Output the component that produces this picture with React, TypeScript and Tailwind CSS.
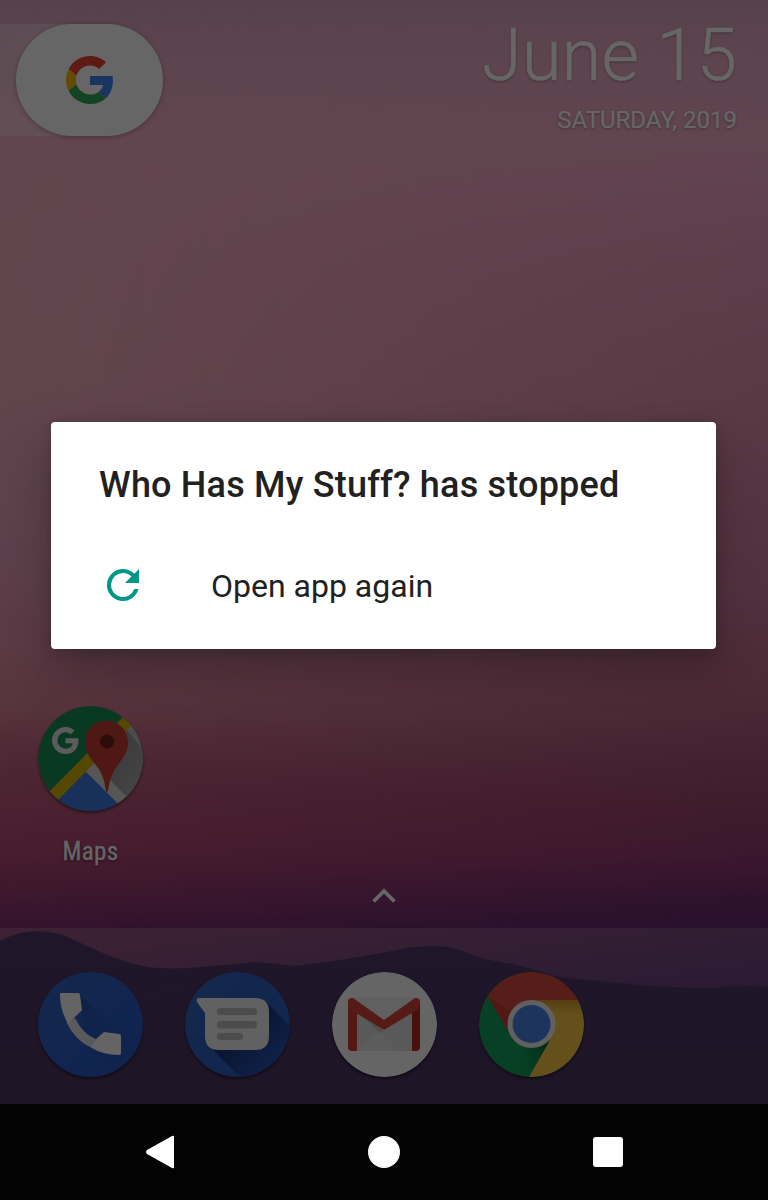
import React from "react";

function GoogleG({ className, mono }: { className: string; mono?: boolean }) {
  const c = mono ? ["#e6e6e6", "#e6e6e6", "#e6e6e6", "#e6e6e6"] : ["#4285f4", "#34a853", "#fbbc05", "#ea4335"];
  return (
    <svg viewBox="0 0 48 48" className={className}>
      <path fill={c[3]} d="M24 9.5c3.54 0 6.71 1.22 9.21 3.6l6.85-6.85C35.9 2.38 30.47 0 24 0 14.62 0 6.51 5.38 2.56 13.22l7.98 6.19C12.43 13.72 17.74 9.5 24 9.5z" />
      <path fill={c[0]} d="M46.98 24.55c0-1.57-.15-3.09-.38-4.55H24v9.02h12.94c-.58 2.96-2.26 5.48-4.78 7.18l7.73 6c4.51-4.18 7.09-10.36 7.09-17.65z" />
      <path fill={c[2]} d="M10.53 28.59c-.48-1.45-.76-2.99-.76-4.59s.27-3.14.76-4.59l-7.98-6.19C.92 16.46 0 20.12 0 24c0 3.88.92 7.54 2.56 10.78l7.97-6.19z" />
      <path fill={c[1]} d="M24 48c6.48 0 11.93-2.13 15.89-5.81l-7.73-6c-2.15 1.45-4.92 2.3-8.16 2.3-6.26 0-11.57-4.22-13.47-9.91l-7.98 6.19C6.51 42.62 14.62 48 24 48z" />
    </svg>
  );
}

const iconClass = "block size-[105px] shrink-0 rounded-full shadow-[0_2px_3px_rgba(0,0,0,0.45)]";

function MapsIcon() {
  return (
    <div className="relative size-[105px]">
      <svg viewBox="0 0 105 105" className={iconClass}>
        <defs>
          <clipPath id="maps"><circle cx="52.5" cy="52.5" r="52.5" /></clipPath>
          <linearGradient id="mapsShade" x1="0" y1="0" x2="1" y2="1">
            <stop offset="0" stopColor="#8e8e8e" /><stop offset="1" stopColor="#b4b4b4" />
          </linearGradient>
        </defs>
        <g clipPath="url(#maps)">
          <path fill="#1a8f55" d="M0 0h105v105H0z" />
          <path fill="#bcbcbc" d="M92 19L47 65l44 44h30V19z" />
          <path fill="url(#mapsShade)" d="M89 24L71 74l17 18 30-12V60z" />
          <path fill="#d8d8d8" d="M47 65l8-8 34 34-9 7z" />
          <path fill="#3e7be0" d="M47 65l34 34v10H5z" />
          <path fill="#d8b305" d="M4 93L86 10l9 8L13 101z" />
        </g>
        <path fill="#c53e33" d="M69 86c-2 0-1-9-6-19-5-11-16-16-16-31a21.500 21.500 0 0 1 43 0c0 15-10 20-15 31-5 10-4 19-6 19z" />
        <circle cx="69" cy="35.500" r="7" fill="#6f211c" />
      </svg>
      <GoogleG mono className="absolute top-[21px] left-[14px] size-[27px]" />
    </div>
  );
}

function PhoneIcon() {
  return (
    <svg viewBox="0 0 105 105" className={iconClass}>
      <defs>
        <linearGradient id="ph" x1="0" y1="0" x2="1" y2="1"><stop offset="0" stopColor="#3467c0" /><stop offset=".6" stopColor="#2a5bc8" /><stop offset="1" stopColor="#2a58c2" /></linearGradient>
        <linearGradient id="phs" x1="0" y1="0" x2="1" y2="1"><stop offset="0" stopColor="#153a83" /><stop offset="1" stopColor="#2658b4" stopOpacity="0" /></linearGradient>
      </defs>
      <circle cx="52.500" cy="52.500" r="52.500" fill="url(#ph)" />
      <path fill="url(#phs)" d="M41 22l58 58-20 20-30-26z" opacity=".35" />
      <path fill="#e2e2e2" d="M29 51l8-5c5 10 11 17 21 21l-6 8c-10-5-18-13-23-24z" />
      <path fill="#fafafa" d="M23 21h17q2 0 2 2l2 15-14 14C25 43 22 34 22 22q0-1 1-1z" />
      <path fill="#fafafa" d="M66 60l15 2q2 0 2 2v17q0 2-2 2-16 0-29-8l6-8z" />
    </svg>
  );
}

function MessagesIcon() {
  return (
    <svg viewBox="0 0 105 105" className={iconClass}>
      <defs>
        <linearGradient id="ms" x1="0" y1="0" x2="1" y2="1"><stop offset="0" stopColor="#3467c0" /><stop offset="1" stopColor="#2a5bc8" /></linearGradient>
        <clipPath id="msc"><circle cx="52.500" cy="52.500" r="52.500" /></clipPath>
        <linearGradient id="mss" gradientUnits="userSpaceOnUse" x1="60" y1="60" x2="86" y2="86"><stop offset="0" stopColor="#183a80" /><stop offset="1" stopColor="#2650b0" /></linearGradient>
      </defs>
      <g clipPath="url(#msc)">
        <path fill="url(#ms)" d="M0 0h105v105H0z" />
        <path fill="url(#mss)" d="M80 29l35 35v51H65L23 73z" />
      </g>
      <path fill="#f2f2f2" d="M14 26h56q14 0 14 14v24q0 14-14 14H34q-14 0-14-14V41L12 30q-1-4 2-4z" />
      <g fill="#bdbdbd">
        <rect x="32" y="36" width="40" height="7" rx="3" /><rect x="32" y="49" width="40" height="7.500" rx="3" /><rect x="32" y="61" width="26" height="7" rx="3" />
      </g>
    </svg>
  );
}

function GmailIcon() {
  return (
    <svg viewBox="0 0 105 105" className={iconClass}>
      <circle cx="52.500" cy="52.500" r="52.500" fill="#fdfdfd" />
      <path fill="#efefef" d="M20 25h64v54H20z" />
      <path fill="#dfdfdf" d="M24 38l28 21 28-21v41H66L48 60 24 77z" />
      <path fill="#e6e6e6" d="M24 79v-3l24-16 18 19z" />
      <path fill="#c6c6c6" d="M24 38l28 21-4 2z" />
      <path fill="#cf4136" d="M16 30h9v49h-5q-4 0-4-4z" />
      <path fill="#b52b20" d="M80 30h8v45q0 4-4 4h-4z" />
      <path fill="#d8453a" d="M16 32q-1-7 5-6l31 22 31-22q6-1 5 6l-3 6-33 20-33-20z" />
    </svg>
  );
}

function ChromeIcon() {
  return (
    <svg viewBox="0 0 105 105" className={iconClass}>
      <defs>
        <clipPath id="chr"><circle cx="52.500" cy="52.500" r="52.500" /></clipPath>
        <linearGradient id="cg" x1="1" y1="0" x2="0" y2=".5"><stop offset="0" stopColor="#07552f" /><stop offset="1" stopColor="#12a05a" stopOpacity="0" /></linearGradient>
        <linearGradient id="cy" x1="0" y1="0" x2="0" y2="1"><stop offset="0" stopColor="#d19f28" /><stop offset=".2" stopColor="#f7c945" /></linearGradient>
      </defs>
      <g clipPath="url(#chr)">
        <path fill="#12a05a" d="M0 0h105v105H0z" />
        <path fill="#d94b3f" d="M9 25L0-9h105v37H52L30 61z" />
        <path fill="#a92f26" opacity=".35" d="M9 25l21 35 3-20z" />
        <path fill="url(#cg)" d="M45 76l26-6-20 36-16-4z" />
        <path fill="url(#cy)" d="M52 28h53v77H50l21-37z" />
      </g>
      <circle cx="52.500" cy="52" r="24" fill="#f1f1f1" />
      <circle cx="52.500" cy="52" r="19" fill="#4a86e8" />
    </svg>
  );
}

export default function App() {
  return (
    <div className="relative isolate flex h-[1200px] w-[768px] flex-col overflow-hidden bg-black font-[Roboto,sans-serif]">
      <div className="absolute inset-x-0 top-0 -z-10 h-[928px] bg-[linear-gradient(180deg,#d7a3bb_0px,#e6aac3_48px,#f5afc6_140px,#f5afc1_380px,#e9a4bd_480px,#e49fb9_560px,#e293ab_640px,#dc859d_700px,#c0607f_770px,#b54b76_850px,#9a3c72_895px,#803070_928px)]" />
      <div className="absolute inset-x-0 top-0 -z-10 h-[928px] bg-[linear-gradient(180deg,#d7a3bb_0px,#e6aac3_48px,#f1abc6_140px,#e69bb9_270px,#dc91ac_400px,#d282a2_500px,#c87898_600px,#b96482_700px,#a04670_800px,#963a74_855px,#753070_895px,#64286e_928px)] [mask-image:linear-gradient(90deg,transparent,black)]" />
      <div className="flex h-[1104px] flex-col">
        <header className="flex h-[140px] justify-between pt-6 pr-[31px]">
          <div className="h-28 w-[163px] rounded-r-full bg-gradient-to-r from-white/25 to-white/40 pl-4">
            <div className="flex h-28 w-[147px] items-center justify-center rounded-[56px] bg-white shadow-[0_1px_5px_rgba(0,0,0,0.3)]">
              <GoogleG className="size-12" />
            </div>
          </div>
          <div className="text-right text-white [text-shadow:0_1px_3px_rgba(0,0,0,0.35)]">
            <div className="h-[76px] text-[72.5px] leading-[64px] font-light [-webkit-text-stroke:0.5px_white]">June 15</div>
            <div className="text-[24px] leading-10 [-webkit-text-stroke:0.2px_white]">SATURDAY, 2019</div>
          </div>
        </header>
        <main className="flex grow flex-col justify-end">
          <div className="ml-[38px] flex h-[222px] w-[105px] flex-col items-center">
            <MapsIcon />
            <div className="mt-[25px] font-['Roboto_Condensed',Roboto,sans-serif] text-[25px] leading-[31px] tracking-[0.4px] text-white [-webkit-text-stroke:0.3px_white] [text-shadow:0_1px_3px_rgba(0,0,0,0.6)]">Maps</div>
          </div>
        </main>
        <footer className="relative h-[176px] overflow-hidden bg-[linear-gradient(173deg,#9a5580_0,#874f80_60px,#68447f_150px)]">
          <svg viewBox="0 0 768 176" className="absolute inset-0 size-full">
            <defs><linearGradient id="hills" x1="0" y1="0" x2="0" y2="1"><stop offset="0" stopColor="#51376a" /><stop offset="1" stopColor="#4b3560" /></linearGradient></defs>
            <path fill="url(#hills)" d="M0 13Q28-3 63 7c24 10 60 31 96 33 28 2 52-3 78-4 20-4 38 0 58 2 43-5 82-12 118-19 20-1 36-2 50 4 20 9 27 9 49 13 25 5 39 13 65 15 50 5 90 9 132 9 25-2 37-3 59-1v117H0z" />
            <path d="M143 69q25-7 45-11" stroke="#5a3868" strokeWidth="2" fill="none" />
          </svg>
          <div className="relative flex gap-[42px] pt-[44px] pl-[38px]">
            <PhoneIcon /><MessagesIcon /><GmailIcon /><ChromeIcon />
          </div>
        </footer>
      </div>
      <svg viewBox="0 0 24 16" className="absolute top-[888px] left-[372px] h-4 w-6"><path d="M1.500 13.500L12 3l10.500 10.500" fill="none" stroke="#fff" strokeWidth="3.800" /></svg>
      <div className="absolute inset-x-0 top-0 h-[1104px] bg-black/60" />
      <nav className="grid h-24 grid-cols-[208px_224px_208px] items-center justify-items-center bg-[#030304] px-16 text-white">
        <svg viewBox="0 0 32 36" className="ml-[-16px] h-9 w-8"><path fill="currentColor" d="M28 2q2-1 2 1v30q0 2-2 1L3 20q-2-2 0-4z" /></svg>
        <div className="size-8 rounded-full bg-white" />
        <div className="ml-4 size-[30px] rounded-[3px] bg-white" />
      </nav>
      <section className="absolute top-[422px] left-[51px] flex h-[227px] w-[665px] flex-col rounded-[4px] bg-white px-12 pt-10 text-[#212121] shadow-[0_22px_40px_rgba(0,0,0,0.22),0_2px_12px_rgba(0,0,0,0.15)]">
        <h1 className="text-[36px] leading-[46px] font-medium tracking-[0.2px] whitespace-nowrap">Who Has My Stuff? has stopped</h1>
        <button className="mt-[53px] flex h-12 items-center text-left">
          <svg viewBox="0 0 24 24" className="size-12 shrink-0 text-[#009688]">
            <path fill="currentColor" d="M17.650 6.350A7.960 7.960 0 0 0 12 4a8 8 0 1 0 7.730 10h-2.080A6 6 0 1 1 12 6c1.660 0 3.140.69 4.220 1.780L13 11h7V4z" />
          </svg>
          <span className="ml-16 pt-0.5 text-[32px] leading-10">Open app again</span>
        </button>
      </section>
    </div>
  );
}
